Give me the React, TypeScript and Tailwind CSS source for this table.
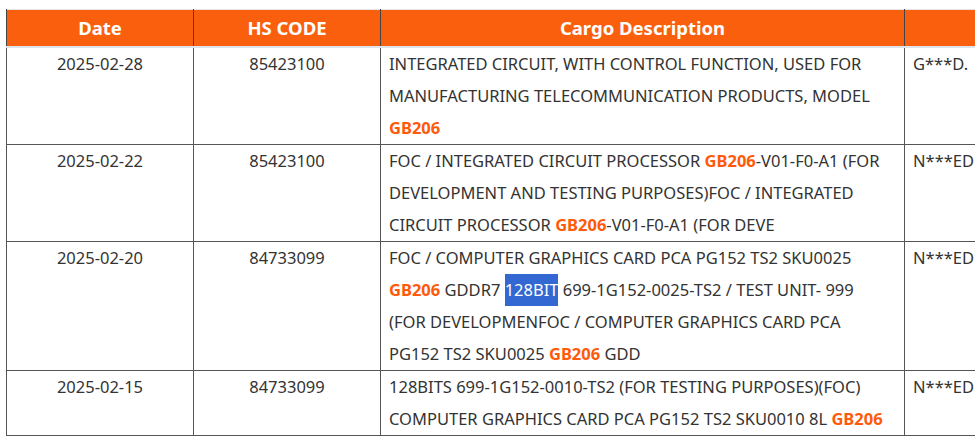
type Part = string | { hl?: string; sel?: string } | "br";

const rows: { date: string; hs: string; desc: Part[]; who: string }[] = [
  {
    date: "2025-02-28",
    hs: "85423100",
    desc: [
      "INTEGRATED CIRCUIT, WITH CONTROL FUNCTION, USED FOR",
      "br",
      "MANUFACTURING TELECOMMUNICATION PRODUCTS, MODEL",
      "br",
      { hl: "GB206" },
    ],
    who: "G***D.",
  },
  {
    date: "2025-02-22",
    hs: "85423100",
    desc: [
      "FOC / INTEGRATED CIRCUIT PROCESSOR ",
      { hl: "GB206" },
      "-V01-F0-A1 (FOR",
      "br",
      "DEVELOPMENT AND TESTING PURPOSES)FOC / INTEGRATED",
      "br",
      "CIRCUIT PROCESSOR ",
      { hl: "GB206" },
      "-V01-F0-A1 (FOR DEVE",
    ],
    who: "N***ED",
  },
  {
    date: "2025-02-20",
    hs: "84733099",
    desc: [
      "FOC / COMPUTER GRAPHICS CARD PCA PG152 TS2 SKU0025",
      "br",
      { hl: "GB206" },
      " GDDR7 ",
      { sel: "128BIT" },
      " 699-1G152-0025-TS2 / TEST UNIT- 999",
      "br",
      "(FOR DEVELOPMENFOC / COMPUTER GRAPHICS CARD PCA",
      "br",
      "PG152 TS2 SKU0025 ",
      { hl: "GB206" },
      " GDD",
    ],
    who: "N***ED",
  },
  {
    date: "2025-02-15",
    hs: "84733099",
    desc: [
      "128BITS 699-1G152-0010-TS2 (FOR TESTING PURPOSES)(FOC)",
      "br",
      "COMPUTER GRAPHICS CARD PCA PG152 TS2 SKU0010 8L ",
      { hl: "GB206" },
    ],
    who: "N***ED",
  },
];

const Desc = ({ parts }: { parts: Part[] }) => (
  <>
    {parts.map((p, i) =>
      p === "br" ? (
        <br key={i} />
      ) : typeof p === "string" ? (
        <span key={i}>{p}</span>
      ) : p.hl ? (
        <span key={i} className="font-bold text-[#ff5a0a]">
          {p.hl}
        </span>
      ) : (
        <span key={i} className="inline-block bg-[#3367d1] text-white leading-[32px]">
          {p.sel}
        </span>
      )
    )}
  </>
);

export default function App() {
  return (
    <div className="w-[975px] h-[436px] overflow-hidden bg-white pl-[6px] pt-[9px] font-['Noto_Sans','Open_Sans',sans-serif] text-[#333]">
      <table className="table-fixed border-collapse w-[1100px] text-[16.5px] leading-[32px]">
        <colgroup>
          <col className="w-[187px]" />
          <col className="w-[187px]" />
          <col className="w-[524px]" />
          <col />
        </colgroup>
        <thead>
          <tr className="bg-[#fa5f0e] text-white text-[18.5px] font-bold h-[37px] border-t border-[#e5e5e5] border-b-2 border-b-[#dfe3ea]">
            <th className="border-x border-[#444] font-bold leading-[36px]">Date</th>
            <th className="border-x border-[#444] font-bold leading-[36px]">HS CODE</th>
            <th className="border-x border-[#444] font-bold leading-[36px]">Cargo Description</th>
            <th className="border-x border-[#444] font-bold leading-[36px]"></th>
          </tr>
        </thead>
        <tbody>
          {rows.map((r) => (
            <tr key={r.date} className="border-b border-[#555] align-top">
              <td className="border-x border-[#555] text-center">{r.date}</td>
              <td className="border-x border-[#555] text-center">{r.hs}</td>
              <td className="border-x border-[#555] px-2 whitespace-nowrap">
                <Desc parts={r.desc} />
              </td>
              <td className="border-x border-[#555] px-2">{r.who}</td>
            </tr>
          ))}
        </tbody>
      </table>
    </div>
  );
}
